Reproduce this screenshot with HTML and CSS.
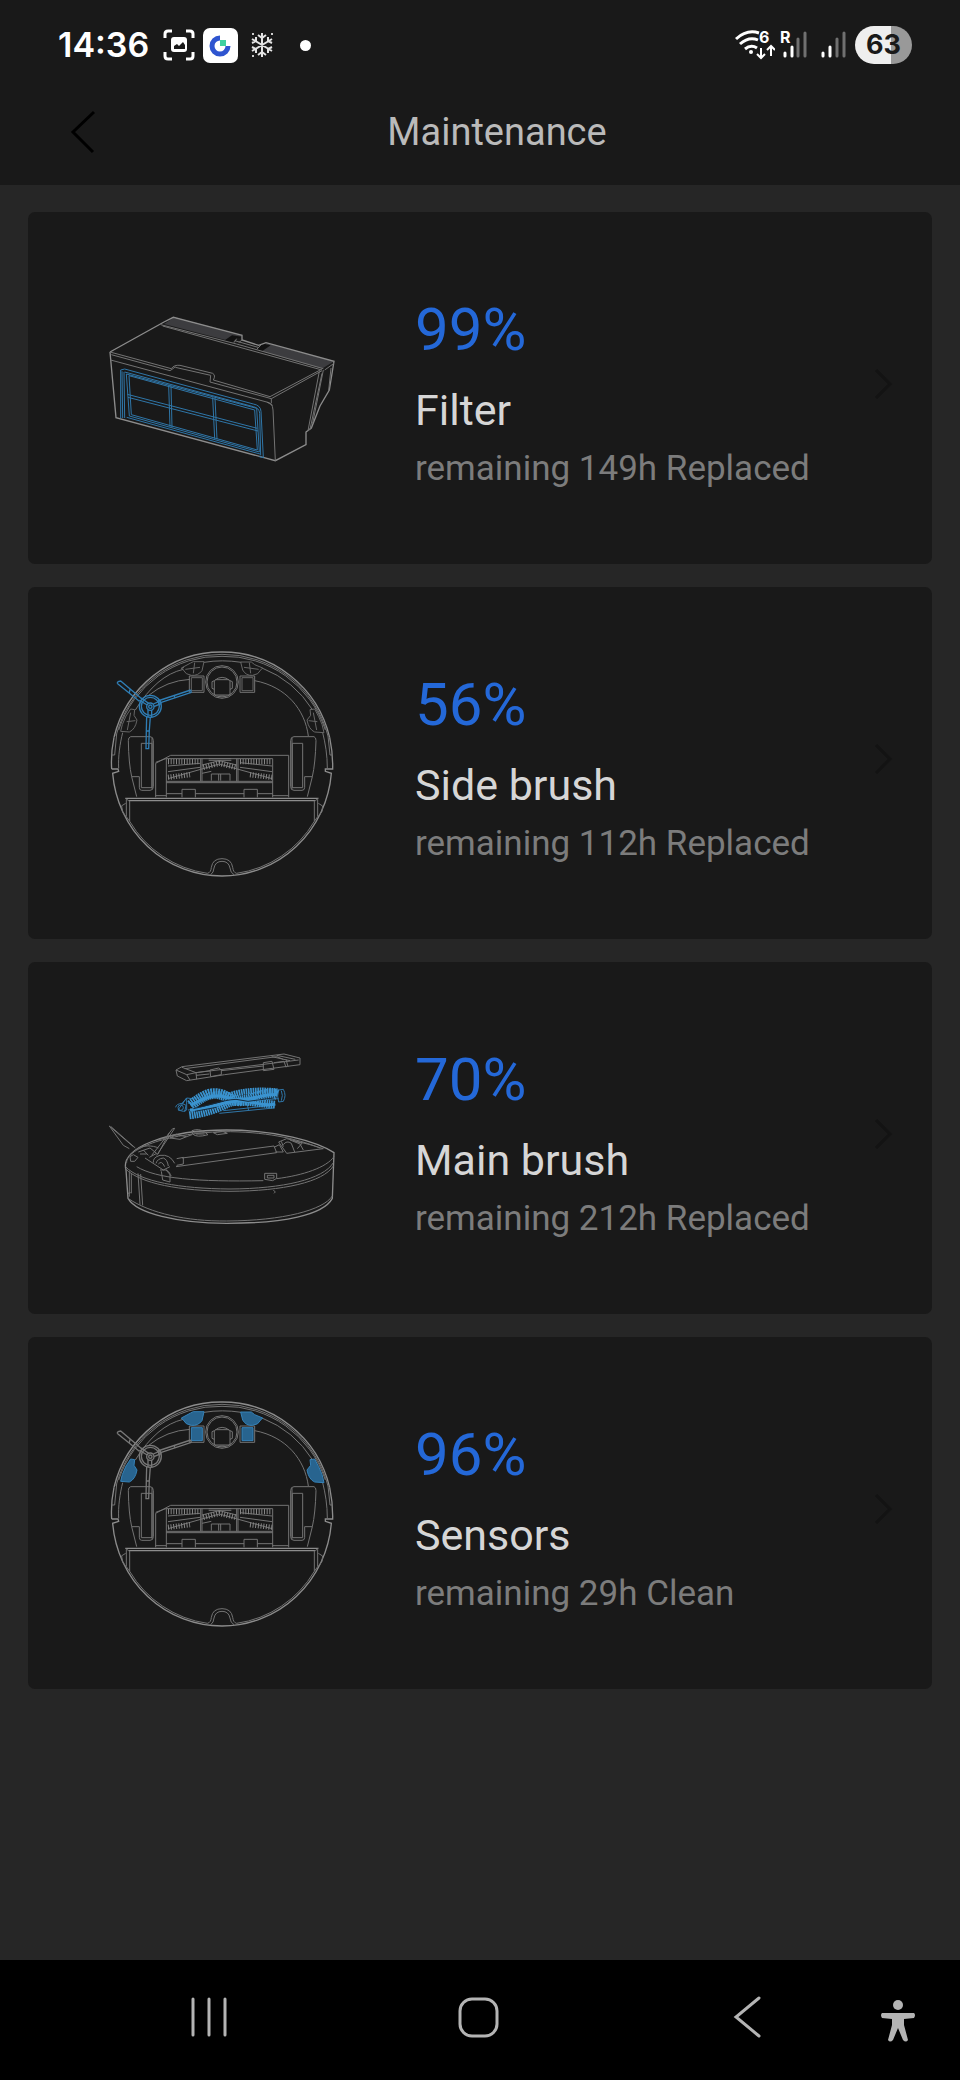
FILE: index.html
```html
<!DOCTYPE html>
<html lang="en">
<head>
<meta charset="utf-8">
<meta name="viewport" content="width=device-width, initial-scale=1">
<title>Maintenance</title>
<link rel="stylesheet" href="styles.css">
</head>
<body>
<svg class="defs" aria-hidden="true">
  <!-- Underside of the robot, shared by the side brush and sensor cards -->
  <symbol id="underside" viewBox="0 9 780 780">
    <g class="line">
      <path class="bold" d="M65 417Q62 370 72 322M65 417H84L86 424L68 430A329 336 0 0 0 396 738A329 336 0 0 0 724 430L706 424V417H728Q729 370 719 322"/>
      <path class="bold" d="M72 322A331 336 0 0 1 396 66A331 336 0 0 1 719 322"/>
      <path d="M78 318A324 328 0 0 1 396 73A324 328 0 0 1 714 318M66 375L74 375L80 312M726 375L720 375L714 318"/>
      <path d="M86 300A318 323 0 0 1 396 79A318 323 0 0 1 706 300M282 112L274 116M342 97Q396 88 454 97M516 114A318 318 0 0 1 668 240M86 415C84 380 90 340 98 308M712 415C712 375 706 340 698 308"/>
      <path d="M136 240Q200 136 280 118M176 196Q230 152 300 148M494 152C590 170 645 240 655 318"/>
      <circle cx="396" cy="156" r="49"/><circle cx="396" cy="156" r="45"/>
      <path d="M373 195V152Q396 132 420 152V195H373M373 152L366 155V175L373 178M420 152L427 155V175L420 178M376 149H417M384 204L388 198H404L408 204"/>
      <path d="M298 138H342V187H298ZM450 138H494V187H450Z"/>
      <path d="M122 320H180Q190 320 190 332V470Q190 481 180 481H155Q148 481 148 472V440H125L140 500M122 320Q115 322 115 332Q116 400 125 440M186 324V476M154 340H186V473H154Z"/>
      <path d="M672 320H612Q602 320 602 332V470Q602 481 612 481H636Q644 481 644 472V440H667L652 500M672 320Q678 322 678 332Q676 400 667 440M606 324V476M607 340H638V473H607Z"/>
      <path d="M197 502V400L242 376H596V502M197 397L230 385M229 386H548V502M229 386V502M229 454H548M229 458H548M332 386V454M336 386V454M440 386V454M444 386V454M229 491H276M316 491H462M502 491H548M276 502V478H316V502M462 502V478H502V502M197 497H229M548 497H596"/>
      <path d="M234 408L330 400M234 425L330 412M336 405L388 392L440 405M234 446L388 402L546 446M450 412L546 425M450 398L546 408M356 386H424M356 391H424M336 430L364 424M364 432H420V452M364 432V452M386 432V452M392 432V452"/>
      <path class="bristle" d="M234 395H328M450 395H546M234 442L300 434M480 434L546 442M340 412L388 400L438 412"/>
      <path class="bold" d="M106 505H685M116 512H676"/>
      <path d="M106 505L116 512M685 505L676 512M109 508V560M119 512V574M683 508V560M673 512V574M94 528L107 520M698 528L685 520M95 528Q94 545 106 558M698 528Q700 545 686 558M119 574A324 324 0 0 0 352 730Q363 728 364 712Q368 686 396 686Q424 686 428 712Q430 728 440 730A324 324 0 0 0 673 574M109 560L119 574M683 560L673 574M362 734Q371 728 372 714Q376 694 396 694Q416 694 420 714Q421 728 432 734"/>
    </g>
    <g class="sensor">
      <path d="M274 114L302 99L310 95H342L336 122Q324 138 304 136Q286 134 280 120Z"/>
      <path d="M518 114L494 104L484 96H452L458 120Q468 138 488 136Q506 134 512 120Z"/>
      <path d="M122 237L134 239L132 256L141 270Q136 298 118 306L92 304Q94 286 108 258Z"/>
      <path d="M674 237L660 239L662 256L651 270Q656 298 674 306L702 308Q698 282 686 260Z"/>
    </g>
    <g class="sensor-window"><path d="M304 143H337V182H304ZM456 143H489V182H456Z"/></g>
    <g class="sensor-detail"><path d="M286 118L330 112M314 98L310 130M506 118L462 112M478 98L482 130M122 248L112 300M110 275L136 272M670 248L680 300M682 275L656 272"/></g>
    <g class="brush">
      <path d="M86 154L92 153L156 207M83 161L148 214M86 154Q80 157 83 161M120 179L118 188M203 213L302 180M205 220L304 187M302 180L304 187M252 195L255 203M170 260L169 300L168 356H176L178 300L181 260M169 303H179"/>
      <circle cx="181" cy="229" r="33"/><circle cx="181" cy="229" r="27"/><circle cx="181" cy="230" r="11"/><circle cx="181" cy="230" r="5"/>
      <path d="M148 211L172 225M153 204L176 220M190 222L213 212M192 230L214 220M174 239V262M185 240V262"/>
    </g>
  </symbol>
  <symbol id="chevron" viewBox="0 0 20 32"><path d="M2 2L16 16L2 30"/></symbol>
</svg>

<div class="screen">
  <header class="top">
    <div class="status">
      <span class="clock">14:36</span>
      <svg class="capture" viewBox="0 0 32 32" width="32" height="32" aria-hidden="true">
        <path d="M2 9V5Q2 2 5 2H9M23 2H27Q30 2 30 5V9M30 23V27Q30 30 27 30H23M9 30H5Q2 30 2 27V23" fill="none" stroke="#fff" stroke-width="3"/>
        <rect x="8" y="8" width="16" height="15" rx="3" fill="#fff"/>
        <path d="M11 20V17L14 15L16 17L20 13L22 16V20Z" fill="#191919"/>
      </svg>
      <svg class="app" viewBox="0 0 35 35" width="35" height="35" aria-hidden="true">
        <rect width="35" height="35" rx="7" fill="#fff"/>
        <path d="M17 10A8 8 0 1 0 25 18" fill="none" stroke="#2f55d0" stroke-width="5"/>
        <rect x="17" y="12" width="6" height="6" fill="#3fd0a0"/>
      </svg>
      <svg class="snow" viewBox="0 0 24 26" width="24" height="26" aria-hidden="true">
        <path d="M12 1V25M2 7L22 19M22 7L2 19M8 3L12 6L16 3M8 23L12 20L16 23M2 11L6 9V5M22 11L18 9V5M2 15L6 17V21M22 15L18 17V21" fill="none" stroke="#e4e4e4" stroke-width="2"/>
        <path d="M2 1h2v2h-2zM21 1h2v2h-2zM2 23h2v2h-2z" fill="#ccc"/>
      </svg>
      <span class="dot"></span>
      <svg class="wifi" viewBox="0 -5 40 40" width="40" height="40" aria-hidden="true">
        <g fill="none" stroke="#fff" stroke-width="3">
          <path d="M1 9Q12 -1 24 3M5 14Q14 6 23 10M10 19Q16 14 22 18"/>
          <path d="M26 18V27M22 24L26 28L30 24M36 26V17M32 20L36 16L40 20" stroke-width="2"/>
        </g>
        <circle cx="16" cy="22" r="2" fill="#fff"/>
        <text x="24" y="13" class="badge">6</text>
      </svg>
      <svg class="signal" viewBox="0 -5 28 40" width="28" height="40" aria-hidden="true">
        <path d="M5 23V26M12 17V26" stroke="#fff"/><path d="M18 9V26M25 3V26" stroke="#707070"/>
        <text x="0" y="13" class="badge">R</text>
      </svg>
      <svg class="signal" viewBox="0 -5 26 40" width="26" height="40" aria-hidden="true">
        <path d="M3 23V26M10 17V26" stroke="#fff"/><path d="M17 9V26M24 3V26" stroke="#707070"/>
      </svg>
      <span class="battery">63</span>
    </div>
    <div class="titlebar">
      <button class="back" aria-label="Back"><svg viewBox="0 0 44 44" width="44" height="44"><path d="M33 2L12 22L32 42"/></svg></button>
      <h1>Maintenance</h1>
    </div>
  </header>

  <main class="list">
    <a class="card" href="#filter">
      <svg class="art" viewBox="0 -126 780 780" aria-hidden="true">
        <path class="shade" d="M250 54L456 108L430 126L222 72ZM530 130L732 184L696 206L512 153Z"/>
        <path d="M426 106L456 110L424 128L402 122ZM522 132L542 136L516 154L496 148Z" fill="#111"/>
        <g class="line">
          <path class="bold" d="M60 156L222 66L250 52L456 106V120L506 136L528 128L732 184L718 270L690 318L664 384L648 396V434L556 482L78 353L60 156"/>
          <path d="M212 74L440 132L700 206M218 78L692 209M434 122L504 142M440 116L432 128M456 120L446 128M514 134L500 148M60 156L244 206Q252 194 270 196L368 220Q378 226 370 240L540 290L696 207M64 164L240 212Q250 206 256 200M62 180L530 306L548 316M256 202L362 226L360 246L544 296V310M530 306Q548 308 549 330L556 482M544 296L696 212M688 214L654 392L664 384M700 210L668 370M704 210L732 190M723 204L716 272M696 220L660 388"/>
        </g>
        <g class="accent">
          <path d="M92 355V210L104 207L490 312Q512 316 513 334L520 473L508 470M98 354L96 214M104 354L102 216M104 216L490 320Q508 324 509 340L512 466"/>
          <path d="M109 222L500 325L508 456L118 348ZM117 227L494 330L502 450L124 344ZM112 283L502 385M114 292L504 393M236 256L240 380M243 258L246 382M368 292L374 416M375 294L381 418M110 352L510 462"/>
        </g>
      </svg>
      <span class="info"><strong>99%</strong><span class="name">Filter</span><span class="left">remaining 149h Replaced</span></span>
      <svg class="go" viewBox="0 0 20 40" width="20" height="40"><use href="#chevron" width="20" height="32"/></svg>
    </a>

    <a class="card" href="#side-brush">
      <svg class="art side" aria-hidden="true"><use href="#underside"/></svg>
      <span class="info"><strong>56%</strong><span class="name">Side brush</span><span class="left">remaining 112h Replaced</span></span>
      <svg class="go" viewBox="0 0 20 40" width="20" height="40"><use href="#chevron" width="20" height="32"/></svg>
    </a>

    <a class="card" href="#main-brush">
      <svg class="art" viewBox="0 -66 780 780" aria-hidden="true">
        <g class="line">
          <path d="M258 120L276 110L582 72L630 84V104L404 134L290 152L262 138ZM258 120L290 134L300 150M276 112L318 128L320 148M290 134L318 128L626 90M284 116L560 80L580 88M318 128L360 122M360 120L386 114L394 120V134L362 140ZM318 136L358 132M394 122L520 108M520 98L546 94L552 118L520 122ZM552 98L582 94L588 112M588 88L594 110M545 80L600 92M560 76L616 88"/>
          <path class="bold" d="M108 420C88 350 240 300 410 300C560 300 680 335 732 368L727 505C700 555 580 580 410 580C260 580 140 550 114 505L108 420"/>
          <path d="M110 398C108 360 220 310 400 305C520 304 620 325 690 354M140 410C200 446 320 456 520 452M560 446C640 436 710 412 732 380M106 410C150 455 270 476 420 477C580 476 700 448 730 398M106 416C150 461 270 483 420 484C580 483 700 456 730 408M114 505C180 550 290 574 410 573C580 572 700 540 727 498M118 424V500M124 430V490M144 430L150 524M152 432L158 526M114 490L122 488M550 480L556 486L552 490"/>
          <path d="M58 288L130 350M63 290L136 354M58 288L100 346L118 356M248 296L185 376M254 295L200 376M248 296L254 295M238 308L204 372M120 380L130 374L144 382L134 394H122ZM140 358C155 344 190 346 205 354M145 366L180 354L200 370L178 382M150 372H170M160 360L175 376M165 384L220 420L240 410M190 398Q188 382 210 376Q240 372 254 400M198 400Q202 386 220 384Q232 388 235 408M205 402Q215 390 224 410"/>
          <path d="M276 384L552 348L560 368L258 410M260 386L280 382L280 402L260 406M210 420L230 420L240 430V456L218 450L214 424M228 420L244 438M524 430H560V445L548 452L524 448ZM532 436H552V444H532ZM552 352L568 344L580 366H556M566 336L590 326L660 344L700 356L590 370ZM580 344Q590 330 604 340L614 366M600 330L630 342L640 360M610 332L636 340L622 356M574 334L580 350"/>
          <path d="M240 324L258 314L290 320L270 328ZM306 302Q326 294 344 306L354 314Q320 324 308 312ZM312 306H342M318 312H344M370 308L398 304L412 310L382 314ZM290 320L306 314M204 330L260 312"/>
        </g>
        <g class="accent">
          <path d="M257 232Q258 222 276 220L290 204L308 206M290 204V240L280 244L264 240ZM276 220L288 226L284 246M306 204L350 204M294 220L306 216M566 180L580 178Q590 196 580 214L566 216Q560 198 566 180M574 182Q580 196 574 212M388 250L550 234M400 242L550 226M472 224L476 242M294 240L390 232L440 214L566 206"/>
          <circle cx="272" cy="233" r="8"/>
          <path class="ribbon" d="M302 226C340 196 370 176 416 204S520 180 562 194"/>
          <path class="ribbon-core" d="M302 226C340 206 370 188 416 204S520 190 562 194"/>
          <path class="ribbon low" d="M298 256C345 250 380 238 412 222S480 218 556 224"/>
          <path class="ribbon-core" d="M300 240C350 238 400 216 440 212S510 232 556 222"/>
          <path class="ribbon top" d="M344 202C372 190 392 190 420 196C460 180 520 180 562 184"/>
        </g>
        <path d="M310 236C360 226 396 210 438 208L474 214L550 204M314 244L380 232" fill="none" stroke="#142b3e" stroke-width="3"/>
      </svg>
      <span class="info"><strong>70%</strong><span class="name">Main brush</span><span class="left">remaining 212h Replaced</span></span>
      <svg class="go" viewBox="0 0 20 40" width="20" height="40"><use href="#chevron" width="20" height="32"/></svg>
    </a>

    <a class="card" href="#sensors">
      <svg class="art sensors" aria-hidden="true"><use href="#underside"/></svg>
      <span class="info"><strong>96%</strong><span class="name">Sensors</span><span class="left">remaining 29h Clean</span></span>
      <svg class="go" viewBox="0 0 20 40" width="20" height="40"><use href="#chevron" width="20" height="32"/></svg>
    </a>
  </main>

  <nav class="nav">
    <button aria-label="Recent apps"><svg viewBox="0 0 44 44" width="44" height="44"><path d="M5 4V40M21 4V40M37 4V40"/></svg></button>
    <button aria-label="Home"><svg viewBox="0 0 44 44" width="44" height="44"><rect x="4" y="4" width="37" height="37" rx="12"/></svg></button>
    <button aria-label="Back"><svg viewBox="0 0 44 44" width="44" height="44"><path d="M35 3L12 22L35 41"/></svg></button>
    <button class="access" aria-label="Accessibility"><svg viewBox="0 0 36 44" width="36" height="44"><circle cx="18" cy="6" r="5"/><path d="M2 14H34Q36 16 34 19L24 20L24 26L28 41Q26 44 23 41L18 29L13 41Q10 44 8 41L12 26V20L2 19Q0 16 2 14Z"/></svg></button>
  </nav>
</div>
</body>
</html>
```
FILE: styles.css
```css
* { box-sizing: border-box; }

body {
  margin: 0;
  background: #262626;
  color: #d6d6d6;
  font-family: Roboto, "Liberation Sans", sans-serif;
}

button {
  padding: 0;
  border: 0;
  background: none;
}

svg { display: block; flex: none; }
.defs { position: absolute; width: 0; height: 0; }

.screen {
  display: flex;
  flex-direction: column;
  min-height: 100vh;
}

.top { background: #191919; }

.status {
  display: flex;
  align-items: center;
  height: 80px;
  padding: 10px 48px 0 58px;
}

.clock {
  width: 90px;
  color: #fff;
  font: 600 34px/40px Inter, Roboto, sans-serif;
}

.capture { margin-left: 15px; }
.app { margin-left: 8px; }
.snow { margin-left: 12px; }

.dot {
  width: 11px;
  height: 11px;
  margin: 0 auto 0 26px;
  border-radius: 50%;
  background: #fff;
}

.badge { fill: #fff; font: 700 16px Inter, sans-serif; }
.signal { margin-left: 5px; fill: none; stroke-width: 3; stroke-linecap: round; }
.signal + .signal { margin-left: 12px; }

.battery {
  width: 57px;
  height: 38px;
  margin-left: 9px;
  border-radius: 19px;
  background: linear-gradient(90deg, #eee 63%, #999 63%);
  color: #191919;
  font: 700 27px/38px Inter, Roboto, sans-serif;
  text-align: center;
}

.titlebar {
  display: flex;
  align-items: center;
  height: 105px;
  padding: 0 71px 2px 61px;
}

.back svg { fill: none; stroke: #000; stroke-width: 3; }

h1 {
  flex: 1;
  margin: 0;
  color: #bababa;
  font-size: 38px;
  font-weight: 400;
  line-height: 44px;
  text-align: center;
}

.list {
  display: grid;
  gap: 23px;
  padding: 27px 28px;
}

.card {
  display: flex;
  align-items: center;
  padding: 46px 38px 46px 62px;
  border-radius: 7px;
  background: #191919;
  color: inherit;
  text-decoration: none;
}

.art { width: 260px; height: 260px; }

.info {
  display: flex;
  flex: 1;
  flex-direction: column;
  padding: 8px 0 0 65px;
}

.info strong {
  margin-bottom: 20px;
  color: #2468d8;
  font-size: 60px;
  font-weight: 400;
  line-height: 70px;
}

.name {
  margin-bottom: 13px;
  font-size: 43px;
  line-height: 50px;
}

.left {
  color: #7c7c7c;
  font-size: 35px;
  line-height: 41px;
}

.go { fill: none; stroke: #131313; stroke-width: 3; }

/* Illustrations */
.line { fill: none; stroke: #737373; stroke-width: 3; }
.bold { stroke: #8c8c8c; stroke-width: 4; }
.bristle { stroke: #858585; stroke-width: 16; stroke-dasharray: 3 5; }
.shade { fill: #3c3c3f; }
.accent { fill: none; stroke: #2f76a8; stroke-width: 3; }
.ribbon { stroke: #3a93cf; stroke-width: 32; stroke-dasharray: 5 2; }
.ribbon.low { stroke-width: 24; }
.ribbon.top { background: none; stroke-width: 18; }
.ribbon-core { stroke: #3a93cf; stroke-width: 9; }

.sensor { fill: var(--sensor-fill); stroke: var(--sensor-line); stroke-width: 3; }
.sensor-window { fill: var(--sensor-fill); stroke: var(--sensor-line); stroke-width: 3; }
.sensor-detail { fill: none; stroke: var(--detail-line); stroke-width: 3; }
.brush { fill: none; stroke: var(--brush-line); stroke-width: 4; }

.side {
  --sensor-fill: none;
  --sensor-line: #666;
  --detail-line: #666;
  --brush-line: #2f7db4;
}

.sensors {
  --sensor-fill: #28648f;
  --sensor-line: #3582b8;
  --detail-line: none;
  --brush-line: #777;
}

/* System navigation */
.nav {
  display: grid;
  grid-template-columns: 1fr 1fr 1fr 36px;
  align-items: center;
  justify-items: center;
  height: 120px;
  margin-top: auto;
  padding: 0 44px 6px 76px;
  background: #000;
}

.nav svg { fill: none; stroke: #b4b4b4; stroke-width: 3; stroke-linecap: round; }
.nav .access { padding-top: 8px; }
.nav .access svg { fill: #b4b4b4; stroke: none; }
```
